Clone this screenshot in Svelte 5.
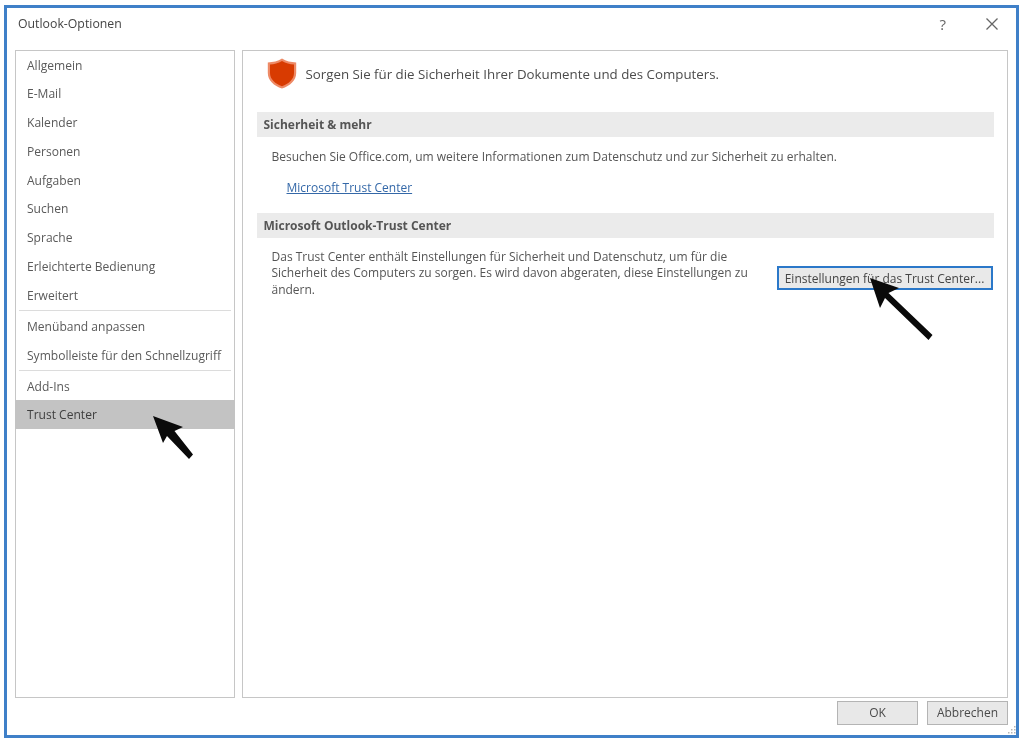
<script>
  const groups = [
    ['Allgemein', 'E-Mail', 'Kalender', 'Personen', 'Aufgaben', 'Suchen', 'Sprache', 'Erleichterte Bedienung', 'Erweitert'],
    ['Menüband anpassen', 'Symbolleiste für den Schnellzugriff'],
    ['Add-Ins', 'Trust Center']
  ];
</script>

<div class="window">
  <header class="titlebar">
    <span class="title">Outlook-Optionen</span>
    <span class="help">?</span>
    <svg class="close" width="14" height="14" viewBox="0 0 14 14"><path d="M1.500 1.500 12.500 12.500M12.500 1.500 1.500 12.500" stroke="#666" stroke-width="1.300" fill="none"/></svg>
  </header>

  <div class="content">
    <nav class="sidebar">
      {#each groups as group, g}
        {#if g > 0}<div class="sep"></div>{/if}
        {#each group as item}
          <div class="item" class:selected={item === 'Trust Center'}>{item}</div>
        {/each}
      {/each}
    </nav>

    <main class="panel">
      <div class="lead">
        <svg width="30" height="31" viewBox="0 0 30 31">
          <path d="M15 .6C11 3.400 6 4.400 .8 4.400V15C.8 22.500 7 27.800 15 30.600 23 27.800 29.200 22.500 29.200 15V4.400C24 4.400 19 3.400 15 .6Z" fill="#ee8a66"/>
          <path d="M15 3C11.200 5.400 7 6.400 3 6.600V15C3 21.300 8.300 25.800 15 28.200 21.700 25.800 27 21.300 27 15V6.600C23 6.400 18.800 5.400 15 3Z" fill="#d83b01"/>
        </svg>
        <span>Sorgen Sie für die Sicherheit Ihrer Dokumente und des Computers.</span>
      </div>

      <h2 class="head first">Sicherheit &amp; mehr</h2>
      <p class="info">Besuchen Sie Office.com, um weitere Informationen zum Datenschutz und zur Sicherheit zu erhalten.</p>
      <a class="link" href="#top">Microsoft Trust Center</a>

      <h2 class="head second">Microsoft Outlook-Trust Center</h2>
      <div class="row">
        <p class="desc">Das Trust Center enthält Einstellungen für Sicherheit und Datenschutz, um für die Sicherheit des Computers zu sorgen. Es wird davon abgeraten, diese Einstellungen zu ändern.</p>
        <button class="tc">Einstellungen für das Trust Center...</button>
      </div>
    </main>
  </div>

  <footer class="actions">
    <button class="btn">OK</button>
    <button class="btn">Abbrechen</button>
  </footer>
  <svg class="grip" width="8" height="8" viewBox="0 0 8 8" fill="#b5b5b5">
    <rect x="6" y="0" width="1.500" height="1.500"/><rect x="3" y="3" width="1.500" height="1.500"/><rect x="6" y="3" width="1.500" height="1.500"/>
    <rect x="0" y="6" width="1.500" height="1.500"/><rect x="3" y="6" width="1.500" height="1.500"/><rect x="6" y="6" width="1.500" height="1.500"/>
  </svg>
</div>

<svg class="overlay" width="1024" height="742" viewBox="0 0 1024 742">
  <path d="M153 416 183 427 174.500 431 193 454.500 189 459 167 436 163 443Z" fill="#0a0a0a"/>
  <path d="M870 278 899 288 888.500 293 932.500 335 928.500 340 885 298 880 308Z" fill="#0a0a0a"/>
</svg>

<style>
  :global(body) { margin: 0; background: #fff; }

  .window {
    position: relative;
    box-sizing: border-box;
    width: 1015px;
    height: 733px;
    margin: 5px 0 0 4px;
    border: 3px solid #3f80c8;
    background: #fff;
    display: flex;
    flex-direction: column;
    font: 12px/1 "Open Sans", "Noto Sans", sans-serif;
    color: #4c4c4c;
    filter: blur(0.4px);
  }

  .titlebar {
    height: 42px;
    flex: none;
    display: flex;
    align-items: center;
    padding: 0 17.500px 0 11px;
    box-sizing: border-box;
  }
  .title { flex: 1; color: #444; position: relative; top: -5px; font-size: 12.300px; }
  .help { font-size: 15px; color: #666; margin-right: 38.500px; position: relative; top: -5px; }
  .close { position: relative; top: -5px; }

  .content {
    display: flex;
    gap: 7px;
    padding: 0 8px 0 8px;
    height: 648px;
    flex: none;
  }

  .sidebar {
    width: 220px;
    box-sizing: border-box;
    border: 1.500px solid #c6c6c6;
    padding-top: 0.500px;
  }
  .item {
    height: 28.800px;
    line-height: 28.800px;
    padding-left: 11px;
    color: #5a5a5a;
    white-space: nowrap;
    font-size: 12.050px;
  }
  .item.selected { background: #c3c3c3; color: #3f3f3f; margin: -2px -1px 0; padding-left: 12px; height: 29px; line-height: 29px; }
  .sep { height: 1.500px; background: #dcdcdc; margin: -1px 3px 2px 3px; }

  .panel {
    flex: 1;
    box-sizing: border-box;
    border: 1.500px solid #c6c6c6;
    padding: 6.500px 13.500px 0;
    min-width: 0;
  }

  .lead {
    display: flex;
    align-items: center;
    gap: 9px;
    margin-left: 10px;
    font-size: 13.300px;
    height: 31px;
  }
  .lead span { position: relative; top: 2px; }

  .head {
    margin: 0;
    height: 25px;
    line-height: 25px;
    background: #ebebeb;
    padding-left: 7px;
    font-size: 12px;
    font-weight: 700;
    color: #555;
  }
  .head.first { margin-top: 23px; }
  .head.second { margin-top: 17px; }

  .info { margin: 14px 0 0 15px; height: 14px; color: #555; white-space: nowrap; }
  .link { display: block; margin: 17px 0 0 30px; width: max-content; color: #3468a8; text-decoration: underline; height: 14px; }

  .row { display: flex; justify-content: space-between; padding-right: 1px; }
  .desc { margin: 11px 0 0 15px; width: 490px; line-height: 16.500px; color: #555; }
  .tc {
    margin-top: 28px;
    box-sizing: border-box;
    width: 216px;
    height: 24px;
    padding: 2px 0 0;
    border: 2px solid #2b78c9;
    background: #e9e9e9;
    font: inherit;
    color: #444;
  }

  .actions {
    display: flex;
    justify-content: flex-end;
    gap: 9px;
    padding: 3px 8px 0 0;
  }
  .btn {
    box-sizing: border-box;
    width: 81px;
    height: 24px;
    padding: 0;
    border: 1.500px solid #b4b4b4;
    background: #e8e8e8;
    font: inherit;
    color: #4a4a4a;
  }

  .grip { position: absolute; right: 0; bottom: 1px; }

  .overlay { position: absolute; left: 0; top: 0; pointer-events: none; }
</style>
